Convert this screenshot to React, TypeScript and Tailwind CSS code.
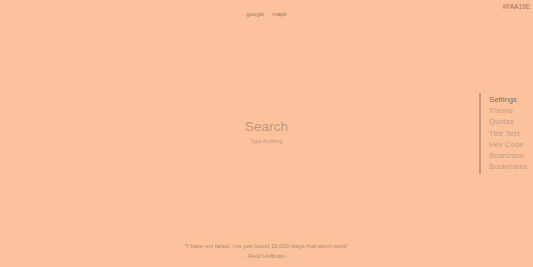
import React from "react";

const menu = ["Settings", "Theme", "Quotes", "Title Text", "Hex Code", "Searchbar", "Bookmarks"];

const App = () => {
  return (
    <div className="relative h-[267px] w-[533px] overflow-hidden bg-[#fbc29b] font-['Liberation_Sans',Arial,sans-serif] text-[#b88e78]">
      {/* hex code */}
      <p className="absolute right-[3px] top-[2px] text-[6.5px] text-[#9a7a68]">#FAA19E</p>

      {/* links */}
      <nav className="flex justify-center gap-[8px] pt-[10px] text-[6px] leading-[8px] text-[#9a7a68]">
        <span>google</span>
        <span>maps</span>
      </nav>

      {/* search */}
      <div className="absolute left-0 right-0 top-[119px] flex flex-col items-center">
        <p className="text-[13.5px] leading-[16px] text-[#c09580]">Search</p>
        <p className="mt-[3px] text-[5px] leading-[6px] text-[#c09580]">Type Anything</p>
      </div>

      {/* side menu */}
      <div className="absolute left-[479px] top-[93px] flex border-l-[2px] border-[#c6987f] pl-[8px] pt-[1px] pb-[2px]">
        <ul className="flex flex-col text-[7.7px] leading-[11.2px]">
          {menu.map((m, i) => (
            <li key={m} className={i === 0 ? "text-[#8c6e5e]" : "text-[#c89c84]"}>
              {m}
            </li>
          ))}
        </ul>
      </div>

      {/* quote */}
      <div className="absolute bottom-[6px] left-0 right-0 flex flex-col items-center text-[6px] leading-[10px] text-[#b08a76]">
        <p>"I have not failed. I've just found 10,000 ways that won't work"</p>
        <p>- Reid Hoffman -</p>
      </div>
    </div>
  );
};

export default App;
